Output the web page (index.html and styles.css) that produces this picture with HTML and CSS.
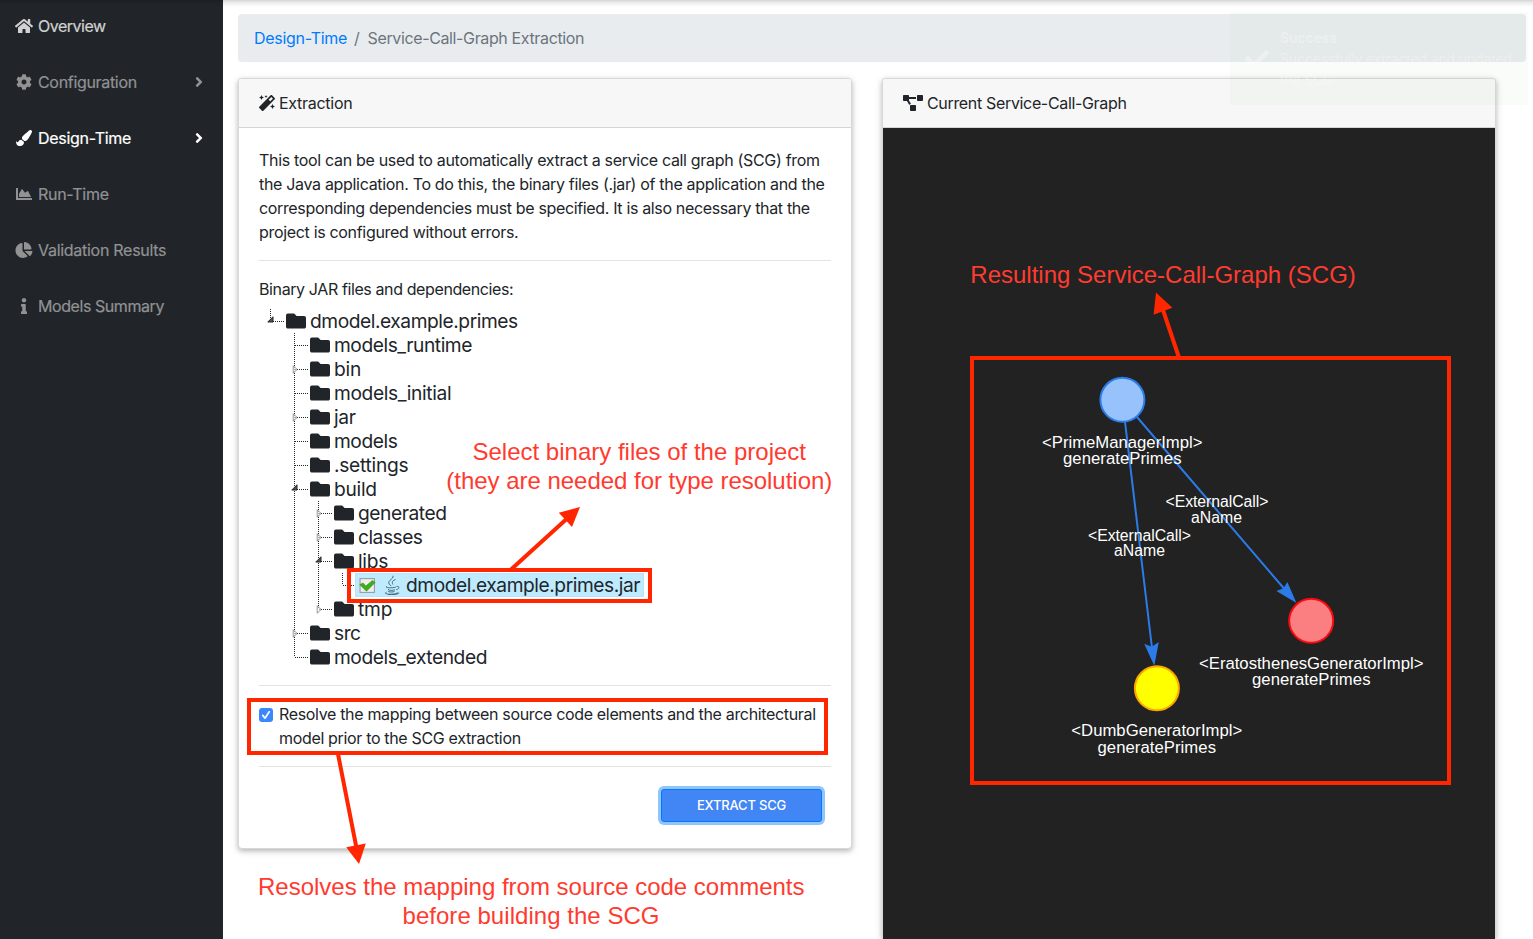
FILE: index.html
```html
<!DOCTYPE html>
<html lang="en">
<head>
<meta charset="utf-8">
<title>Service-Call-Graph Extraction</title>
<link rel="stylesheet" href="styles.css">
</head>
<body>
<svg class="defs" width="0" height="0">
<symbol id="folder" viewBox="0 0 512 512"><path d="M464 128H272l-64-64H48C21.49 64 0 85.49 0 112v288c0 26.51 21.49 48 48 48h416c26.51 0 48-21.49 48-48V176c0-26.51-21.49-48-48-48z"/></symbol>
<symbol id="angle" viewBox="0 0 256 512"><path d="M224.3 273l-136 136c-9.4 9.4-24.6 9.4-33.9 0l-22.6-22.6c-9.4-9.4-9.4-24.6 0-33.9l96.4-96.4-96.4-96.4c-9.4-9.4-9.4-24.6 0-33.9L54.3 103c9.4-9.4 24.6-9.4 33.9 0l136 136c9.5 9.4 9.5 24.6.1 34z"/></symbol>
<symbol id="closed" viewBox="0 0 7 9"><path d="M1.2 .8V8.2L5.2 4.5Z" fill="#fff" fill-opacity=".6" stroke="#8a8a8a" stroke-width=".9"/></symbol>
<symbol id="open" viewBox="0 0 7 7"><path d="M6 .8V6H.8Z" fill="#555" stroke="#212529" stroke-width="1"/></symbol>
</svg>
<div class="app">
<nav class="sidebar">
<a class="nav-item overview"><svg class="ico" viewBox="0 0 576 512"><path d="M280.37 148.26L96 300.11V464a16 16 0 0 0 16 16l112.06-.29a16 16 0 0 0 15.92-16V368a16 16 0 0 1 16-16h64a16 16 0 0 1 16 16v95.64a16 16 0 0 0 16 16.05L464 480a16 16 0 0 0 16-16V300L295.67 148.26a12.19 12.19 0 0 0-15.3 0zM571.6 251.47L488 182.56V44.05a12 12 0 0 0-12-12h-56a12 12 0 0 0-12 12v72.61L318.47 43a48 48 0 0 0-61 0L4.34 251.47a12 12 0 0 0-1.6 16.9l25.5 31A12 12 0 0 0 45.15 301l235.22-193.74a12.19 12.19 0 0 1 15.3 0L530.9 301a12 12 0 0 0 16.9-1.6l25.5-31a12 12 0 0 0-1.7-16.93z"/></svg><span class="ls-50">Overview</span></a>
<a class="nav-item"><svg class="ico" viewBox="0 0 512 512"><path d="M487.4 315.7l-42.6-24.6c4.3-23.2 4.3-47 0-70.2l42.6-24.6c4.9-2.8 7.1-8.6 5.5-14-11.1-35.6-30-67.8-54.7-94.6-3.8-4.1-10-5.1-14.8-2.3L380.8 110c-17.9-15.4-38.5-27.3-60.8-35.1V25.8c0-5.6-3.9-10.5-9.4-11.7-36.7-8.2-74.3-7.8-109.2 0-5.5 1.2-9.4 6.1-9.4 11.7V75c-22.2 7.9-42.8 19.8-60.8 35.1L88.7 85.5c-4.9-2.8-11-1.9-14.8 2.3-24.7 26.7-43.6 58.9-54.7 94.6-1.7 5.4.6 11.2 5.5 14L67.3 221c-4.3 23.2-4.3 47 0 70.2l-42.6 24.6c-4.9 2.8-7.1 8.6-5.5 14 11.1 35.6 30 67.8 54.7 94.6 3.8 4.1 10 5.1 14.8 2.3l42.6-24.6c17.9 15.4 38.5 27.3 60.8 35.1v49.2c0 5.6 3.9 10.5 9.4 11.7 36.7 8.2 74.3 7.8 109.2 0 5.5-1.2 9.4-6.1 9.4-11.7v-49.2c22.2-7.9 42.8-19.8 60.8-35.1l42.6 24.6c4.9 2.8 11 1.9 14.8-2.3 24.7-26.7 43.6-58.9 54.7-94.6 1.5-5.5-.7-11.3-5.6-14.1zM256 336c-44.1 0-80-35.9-80-80s35.9-80 80-80 80 35.9 80 80-35.9 80-80 80z"/></svg><span>Configuration</span><svg class="angle"><use href="#angle"/></svg></a>
<a class="nav-item active"><svg class="ico" viewBox="0 0 512 512"><path d="M167.02 309.34c-40.12 2.58-76.53 17.86-97.19 72.3-2.35 6.21-8 9.98-14.59 9.98-11.11 0-45.46-27.67-55.25-34.35C0 439.62 37.93 512 128 512c75.86 0 128-43.77 128-120.19 0-3.11-.65-6.08-.97-9.13l-88.01-73.34zM457.89 0c-15.16 0-29.37 6.71-40.21 16.45C213.27 199.05 192 203.34 192 257.09c0 13.7 3.25 26.76 8.73 38.7l63.82 53.18c7.21 1.8 14.64 3.03 22.39 3.03 62.11 0 98.11-45.47 211.16-256.46 7.38-14.35 13.9-29.85 13.9-45.99C512 20.64 486 0 457.89 0z"/></svg><span class="ls-28">Design-Time</span><svg class="angle"><use href="#angle"/></svg></a>
<a class="nav-item"><svg class="ico" viewBox="0 0 512 512"><path d="M500 384c6.6 0 12 5.4 12 12v40c0 6.6-5.4 12-12 12H12c-6.6 0-12-5.4-12-12V76c0-6.6 5.4-12 12-12h40c6.6 0 12 5.4 12 12v308h436zM372.7 159.5L288 216l-85.3-113.7c-5.1-6.8-15.5-6.3-19.9 1L96 248v104h384l-89.9-187.8c-3.2-6.5-11.4-8.7-17.4-4.7z"/></svg><span class="ls-28">Run-Time</span></a>
<a class="nav-item"><svg class="ico" viewBox="0 0 544 512"><path d="M527.79 288H290.5l158.03 158.03c6.04 6.04 15.98 6.53 22.19.68 38.7-36.46 65.32-85.61 73.13-140.86 1.34-9.46-6.51-17.85-16.06-17.85zm-15.83-64.8C503.72 103.74 408.26 8.28 288.8.04 279.68-.59 272 7.1 272 16.24V240h223.77c9.14 0 16.82-7.68 16.19-16.8zM224 288V50.71c0-9.55-8.39-17.4-17.84-16.06C86.99 51.49-4.1 155.6.14 280.37 4.5 408.51 114.83 513.59 243.03 511.98c50.4-.63 96.97-16.87 135.26-44.03 7.9-5.6 8.42-17.23 1.57-24.08L224 288z"/></svg><span class="ls-28">Validation Results</span></a>
<a class="nav-item"><svg class="ico" viewBox="0 0 192 512"><path d="M20 424.229h20V279.771H20c-11.046 0-20-8.954-20-20V212c0-11.046 8.954-20 20-20h112c11.046 0 20 8.954 20 20v212.229h20c11.046 0 20 8.954 20 20V492c0 11.046-8.954 20-20 20H20c-11.046 0-20-8.954-20-20v-47.771c0-11.046 8.954-20 20-20zM96 0C56.235 0 24 32.235 24 72s32.235 72 72 72 72-32.235 72-72S135.764 0 96 0z"/></svg><span class="ls-43">Models Summary</span></a>
</nav>
<main class="main">
<div class="breadcrumb"><a class="crumb-link ls-28">Design-Time</a><span class="slash">/</span><span class="ls-37">Service-Call-Graph Extraction</span></div>
<div class="columns">
<section class="card">
<header class="card-header"><svg class="magic" viewBox="0 0 512 512"><path d="M224 96l16-32 32-16-32-16-16-32-16 32-32 16 32 16 16 32zM80 160l26.66-53.33L160 80l-53.34-26.67L80 0 53.34 53.33 0 80l53.34 26.67L80 160zm352 128l-26.66 53.33L352 368l53.34 26.67L432 448l26.66-53.33L512 368l-53.34-26.67L432 288zm70.62-193.77L417.77 9.38C411.53 3.12 403.34 0 395.15 0c-8.19 0-16.38 3.12-22.63 9.38L9.38 372.52c-12.5 12.5-12.5 32.76 0 45.25l84.85 84.85c6.25 6.25 14.44 9.37 22.62 9.37 8.19 0 16.38-3.12 22.63-9.37l363.14-363.15c12.5-12.48 12.5-32.75 0-45.24zM359.45 203.46l-50.91-50.91 86.6-86.6 50.91 50.91-86.6 86.6z"/></svg><span class="ls-28">Extraction</span></header>
<div class="card-body">
<p class="text">This tool can be used to automatically extract a service call graph (SCG) from<br>the Java application. To do this, the binary files (.jar) of the application and the<br><span class="ls-35">corresponding dependencies must be specified. It is also necessary that the</span><br>project is configured without errors.</p>
<hr>
<p class="text label ls-40">Binary JAR files and dependencies:</p>
<ul class="tree">
<li><div class="row"><svg class="tw open"><use href="#open"/></svg><svg class="folder"><use href="#folder"/></svg><span>dmodel.example.primes</span></div>
<ul>
<li><div class="row"><svg class="folder"><use href="#folder"/></svg><span>models_runtime</span></div></li>
<li><div class="row"><svg class="tw closed"><use href="#closed"/></svg><svg class="folder"><use href="#folder"/></svg><span class="ls-20">bin</span></div></li>
<li><div class="row"><svg class="folder"><use href="#folder"/></svg><span class="ls-37">models_initial</span></div></li>
<li><div class="row"><svg class="tw closed"><use href="#closed"/></svg><svg class="folder"><use href="#folder"/></svg><span class="ls-35">jar</span></div></li>
<li><div class="row"><svg class="folder"><use href="#folder"/></svg><span>models</span></div></li>
<li><div class="row"><svg class="folder"><use href="#folder"/></svg><span class="ls-28">.settings</span></div></li>
<li><div class="row"><svg class="tw open"><use href="#open"/></svg><svg class="folder"><use href="#folder"/></svg><span class="ls-28">build</span></div>
<ul>
<li><div class="row"><svg class="tw closed"><use href="#closed"/></svg><svg class="folder"><use href="#folder"/></svg><span>generated</span></div></li>
<li><div class="row"><svg class="tw closed"><use href="#closed"/></svg><svg class="folder"><use href="#folder"/></svg><span class="ls-50">classes</span></div></li>
<li><div class="row"><svg class="tw open"><use href="#open"/></svg><svg class="folder"><use href="#folder"/></svg><span class="ls-28">libs</span></div>
<ul><li><div class="row"><div class="selected"><svg class="check" viewBox="0 0 16 16"><rect x="1" y="1.5" width="13.5" height="13" fill="#eee" stroke="#999"/><path d="M.8 7.2 3.8 5.6 6.4 8.5 12.6 3.2 15.2 5.2 7 13.4Z" fill="#3fae1c" stroke="#2c8a10" stroke-width=".5"/></svg><svg class="java" viewBox="0 0 16 20"><path d="M8.8.8C11 4-0 6 7.2 11M11.5 4.5C7 6.5 8.5 7.5 8.8 9.5M3 11.3C-1 13.2 11 13.2 12 11.8M4 14.2C4.5 15.8 9.5 15.6 11 14.7M4 16C4.5 17.3 9 17.2 10.5 16.4M12.5 11.5C16 10.8 15.5 14 12.3 14.6M2.5 17.2C-3 19.5 12.5 20 13.8 17.5M4 19.5C8 20 13 19.7 15.2 18"/></svg><span>dmodel.example.primes.jar</span></div></div></li></ul></li>
<li><div class="row"><svg class="tw closed"><use href="#closed"/></svg><svg class="folder"><use href="#folder"/></svg><span class="ls-20">tmp</span></div></li>
</ul></li>
<li><div class="row"><svg class="tw closed"><use href="#closed"/></svg><svg class="folder"><use href="#folder"/></svg><span class="ls-50">src</span></div></li>
<li><div class="row"><svg class="folder"><use href="#folder"/></svg><span>models_extended</span></div></li>
</ul></li>
</ul>
<hr>
<label class="option"><span class="checkbox"><svg viewBox="0 0 14 14"><path d="M3.8 7.4 6 10.2 10.2 3.8"/></svg></span><span class="text ls-34">Resolve the mapping between source code elements and the architectural<br>model prior to the SCG extraction</span></label>
<hr>
<div class="actions"><button class="btn">EXTRACT SCG</button></div>
</div>
</section>
<section class="card graph-card">
<header class="card-header"><svg class="diagram" viewBox="0 0 640 512"><path d="M384 320H256c-17.67 0-32 14.33-32 32v128c0 17.67 14.33 32 32 32h128c17.67 0 32-14.33 32-32V352c0-17.67-14.33-32-32-32zM192 32c0-17.67-14.33-32-32-32H32C14.33 0 0 14.33 0 32v128c0 17.67 14.33 32 32 32h95.72l73.16 128.04C211.98 300.98 232.4 288 256 288h.28L192 175.51V128h224V64H192V32zM608 0H480c-17.67 0-32 14.33-32 32v128c0 17.67 14.33 32 32 32h128c17.67 0 32-14.33 32-32V32c0-17.67-14.33-32-32-32z"/></svg><span class="ls-34">Current Service-Call-Graph</span></header>
<svg class="graph" viewBox="883 128 612 811" width="612" height="811">
<g stroke="#2b7ce9" stroke-width="2"><path d="M1122.4 400 1152 648M1122.4 400 1284 588.5"/></g>
<g fill="#2b7ce9"><path d="M1154.3 665.7 1144.2 643.7 1151.7 646.8 1158.8 642Z"/><path d="M1296.5 603 1276.4 591 1283.6 588.2 1287.3 582Z"/></g>
<g stroke-width="2"><circle cx="1122.4" cy="399.8" r="22" fill="#97c2fc" stroke="#2b7ce9"/><circle cx="1156.9" cy="688.3" r="22" fill="#ffff00" stroke="#ffa500"/><circle cx="1311.2" cy="620.8" r="22" fill="#fb7e81" stroke="#fa0a10"/></g>
<g class="node-text">
<text x="1042" y="448" textLength="160.5">&lt;PrimeManagerImpl&gt;</text><text x="1063" y="464" textLength="118.5">generatePrimes</text>
<text x="1199" y="669" textLength="224.5">&lt;EratosthenesGeneratorImpl&gt;</text><text x="1252" y="685" textLength="118.5">generatePrimes</text>
<text x="1071.3" y="736" textLength="171">&lt;DumbGeneratorImpl&gt;</text><text x="1097.5" y="753" textLength="118.5">generatePrimes</text>
</g>
<g class="edge-text">
<text x="1165.5" y="507" textLength="103">&lt;ExternalCall&gt;</text><text x="1191" y="523" textLength="51">aName</text>
<text x="1088" y="541" textLength="103">&lt;ExternalCall&gt;</text><text x="1114" y="556" textLength="51">aName</text>
</g>
</svg>
</section>
</div>
</main>
</div>
<div class="top-shadow"></div>
<div class="toast"><svg viewBox="0 0 512 512"><path d="M173.898 439.404l-166.4-166.4c-9.997-9.997-9.997-26.206 0-36.204l36.203-36.204c9.997-9.998 26.207-9.998 36.204 0L192 312.69 432.095 72.596c9.997-9.997 26.207-9.997 36.204 0l36.203 36.204c9.997 9.997 9.997 26.206 0 36.204l-294.4 294.401c-9.998 9.997-26.207 9.997-36.204-.001z"/></svg><div class="ls-20"><b>Success</b><br>Successfully extracted and updated<br>the SCG.</div></div>
<svg class="notes" viewBox="0 0 1533 939" width="1533" height="939">
<g fill="none" stroke="#ff2600" stroke-width="4"><rect x="972" y="358" width="477" height="425"/><rect x="349" y="570" width="301" height="31"/><rect x="249" y="700" width="577" height="53"/><path d="M1178.8 357 1163 310M510.5 570 566 519.5M338 754 356.3 847"/></g>
<g fill="#ff2600"><path d="M1156 292.5 1172.4 307.7 1153.6 314.7Z"/><path d="M580 507 558.8 512.7 572 527Z"/><path d="M359 864 346.2 847.3 365.8 843.5Z"/></g>
<g class="note-text"><text x="970.3" y="283" textLength="385.5">Resulting Service-Call-Graph (SCG)</text><text x="472.5" y="459.5" textLength="333.5">Select binary files of the project</text><text x="446.3" y="488.5" textLength="386">(they are needed for type resolution)</text><text x="258" y="894.5" textLength="546.5">Resolves the mapping from source code comments</text><text x="402.5" y="923.5" textLength="257">before building the SCG</text></g>
</svg>
</body>
</html>
```
FILE: styles.css
```css
* { box-sizing: border-box; }
body { margin: 0; width: 1533px; height: 939px; overflow: hidden; position: relative; background: #fff; color: #212529; font: 16px/24px Inter, "Liberation Sans", sans-serif; letter-spacing: -.32px; }
.defs { position: absolute; }
svg { fill: currentColor; flex: none; }
.ls-20 { letter-spacing: -.18px; }
.ls-28 { letter-spacing: -.28px; }
.ls-34 { letter-spacing: -.335px; }
.ls-35 { letter-spacing: -.35px; }
.ls-37 { letter-spacing: -.37px; }
.ls-40 { letter-spacing: -.39px; }
.ls-43 { letter-spacing: -.43px; }
.ls-50 { letter-spacing: -.5px; }
.app { display: flex; height: 939px; }
.sidebar { width: 223px; background: #212529; color: #909294; display: flex; flex-direction: column; flex: none; -webkit-text-stroke: .2px; }
.nav-item { display: flex; align-items: center; height: 56px; padding: 0 20px 4px 14px; }
.nav-item.overview { color: #d0d1d2; }
.nav-item.active { color: #fff; }
.ico { width: 20px; height: 16px; margin-right: 4px; }
.angle { width: 8px; height: 16px; margin-left: auto; }
.main { flex: 1; padding: 14px 7px 0 15px; }
.breadcrumb { display: flex; height: 48px; align-items: center; padding-left: 16px; background: #e9ecef; border-radius: 4px; color: #6c757d; }
.crumb-link { color: #007bff; }
.slash { margin: 0 8px 0 7px; }
.columns { display: flex; gap: 30px; margin-top: 16px; align-items: flex-start; }
.card { width: 614px; background: #fff; border: 1px solid #d8d8d8; border-radius: 4px; box-shadow: 0 2px 5px rgba(0,0,0,.22), 0 2px 10px rgba(0,0,0,.1); }
.card-header { height: 49px; display: flex; align-items: center; padding: 0 20px; background: #f7f7f7; border-bottom: 1px solid #d6d6d6; border-radius: 3px 3px 0 0; }
.magic { width: 16px; height: 16px; margin-right: 4px; }
.diagram { width: 20px; height: 16px; margin-right: 4px; }
.card-body { padding: 20px 20px 26px; }
.text { margin: 0; white-space: nowrap; }
hr { margin: 16px 0 0; border: 0; border-top: 1px solid #e3e3e3; }
.label { margin-top: 16px; }
ul { list-style: none; margin: 0; padding: 0; }
.tree { margin-top: 8px; font-size: 19.2px; letter-spacing: -.45px; white-space: nowrap; }
.tree ul { margin-left: 24px; }
.tree li { background: repeating-linear-gradient(to bottom, #212529 0 1px, transparent 1px 2px) 11px 0 / 1px 100% no-repeat; }
.tree li:last-child { background-size: 1px 12px; }
.row { position: relative; display: flex; align-items: center; height: 24px; padding-left: 24px; background: repeating-linear-gradient(to right, #212529 0 1px, transparent 1px 2px) 12px 12px / 13px 1px no-repeat; }
.tw { position: absolute; }
.tw.closed { left: 9px; top: 8px; width: 7px; height: 9px; }
.tw.open { left: 8px; top: 7px; width: 7px; height: 7px; }
.folder { width: 20px; height: 20px; margin: 0 4px 0 3px; }
.selected { display: flex; align-items: center; height: 24px; width: 289px; padding-left: 4px; background: #beebff; border-radius: 2px; box-shadow: inset 0 0 1px #999; }
.check { width: 17px; height: 17px; }
.java { width: 16px; height: 20px; margin: 0 6px 0 8px; fill: none; stroke: #35576a; stroke-width: .85; }
.option { display: flex; margin-top: 16px; }
.checkbox { width: 14px; height: 14px; margin: 6px 6px 0 0; border-radius: 3px; background: #3b88fd; }
.checkbox svg { display: block; width: 14px; height: 14px; fill: none; stroke: #fff; stroke-width: 1.7; stroke-linecap: round; stroke-linejoin: round; }
.actions { display: flex; justify-content: flex-end; margin-top: 22px; padding-right: 9px; }
.btn { width: 161px; height: 33px; padding: 0 0 2px; border: 1px solid #007bff; border-radius: 3px; background: #4285f4; color: #fff; font: 500 13px/20px Inter, sans-serif; letter-spacing: -.2px; box-shadow: 0 0 0 3px #90c5fb; }
.graph-card { border-bottom: 0; }
.graph { display: block; background: #222; letter-spacing: 0; }
.node-text { fill: #fff; font: 16.7px "Liberation Sans", Arial, sans-serif; }
.edge-text { fill: #fff; font: 15.8px "Liberation Sans", Arial, sans-serif; }
.top-shadow { position: absolute; left: 0; right: 0; top: 0; height: 7px; background: linear-gradient(rgba(0,0,0,.17), rgba(0,0,0,.08) 35%, transparent); }
.toast { position: absolute; left: 1230px; top: 12px; width: 298px; height: 93px; display: flex; align-items: center; padding-left: 15px; background: rgba(81,163,50,.03); color: rgba(255,255,255,.32); font-size: 14px; line-height: 21px; white-space: nowrap; }
.toast svg { width: 24px; height: 24px; margin-right: 11px; }
.notes { position: absolute; left: 0; top: 0; letter-spacing: 0; }
.note-text { fill: #ff3b30; font: 24px "Liberation Sans", Arial, sans-serif; }
```
